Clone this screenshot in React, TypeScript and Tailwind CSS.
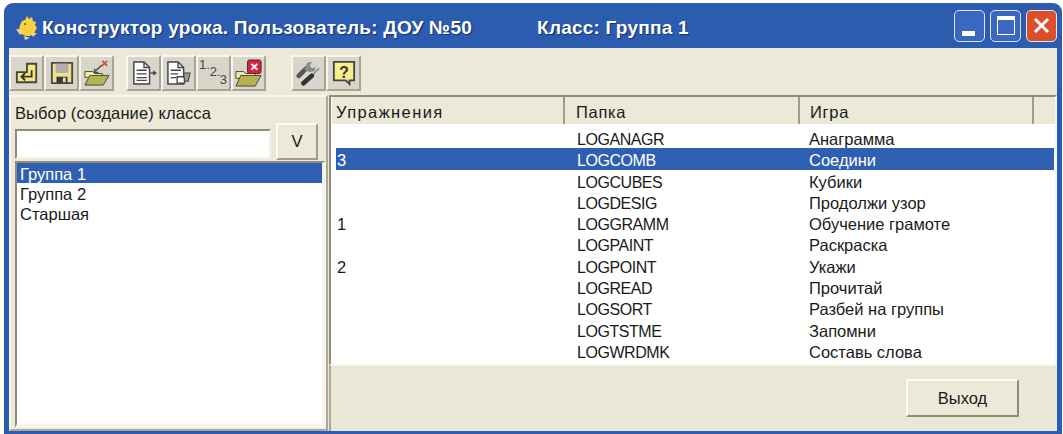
import type { ReactNode } from 'react';

const rows = [
  { order: '', folder: 'LOGANAGR', game: 'Анаграмма' },
  { order: '3', folder: 'LOGCOMB', game: 'Соедини', selected: true },
  { order: '', folder: 'LOGCUBES', game: 'Кубики' },
  { order: '', folder: 'LOGDESIG', game: 'Продолжи узор' },
  { order: '1', folder: 'LOGGRAMM', game: 'Обучение грамоте' },
  { order: '', folder: 'LOGPAINT', game: 'Раскраска' },
  { order: '2', folder: 'LOGPOINT', game: 'Укажи' },
  { order: '', folder: 'LOGREAD', game: 'Прочитай' },
  { order: '', folder: 'LOGSORT', game: 'Разбей на группы' },
  { order: '', folder: 'LOGTSTME', game: 'Запомни' },
  { order: '', folder: 'LOGWRDMK', game: 'Составь слова' },
];

const classes = ['Группа 1', 'Группа 2', 'Старшая'];

function ToolButton({ children }: { children: ReactNode }) {
  return (
    <div className="w-[35px] h-[36px] flex items-center justify-center bg-[#d8d5ca] border-2 border-t-[#f7f6ef] border-l-[#f7f6ef] border-r-[#a8a493] border-b-[#a8a493]">
      {children}
    </div>
  );
}

function IconEnter() {
  return (
    <svg width="24" height="24" viewBox="0 0 26 26">
      <path d="M13 3h10v20H2V12h11z" fill="#f5e67a" stroke="#444" strokeWidth="2" />
      <path d="M18 10v7H8M11 13l-4 4 4 4" fill="none" stroke="#333" strokeWidth="2" />
    </svg>
  );
}

function IconSave() {
  return (
    <svg width="24" height="24" viewBox="0 0 26 26">
      <path d="M2 2h22v22H2z" fill="#efe38a" stroke="#4a4a4a" strokeWidth="2" />
      <path d="M6 3h14v10H6z" fill="#b0b0ac" />
      <path d="M7 17h12v7H7z" fill="#3a3a3a" />
      <path d="M14 18h3v5h-3z" fill="#ddd" />
    </svg>
  );
}

function IconFolderOut() {
  return (
    <svg width="27" height="27" viewBox="0 0 28 28">
      <path d="M2 12h8l2 2h8v4H2z" fill="#f7ee9c" stroke="#444" />
      <path d="M2 26l5-10h20l-6 10z" fill="#b3b350" stroke="#444" />
      <path d="M11 13l9-8M12 9v4h4" fill="none" stroke="#555" strokeWidth="1.6" />
      <path d="M20 1l5 5M25 1l-5 5" stroke="#d9503a" strokeWidth="1.8" />
    </svg>
  );
}

function IconDocArrow() {
  return (
    <svg width="26" height="24" viewBox="0 0 28 26">
      <path d="M3 1h11l6 6v18H3z" fill="#fff" stroke="#444" strokeWidth="1.6" />
      <path d="M14 1v6h6M6 10h11M6 14h11M6 18h11M6 21h11" fill="none" stroke="#444" strokeWidth="1.5" />
      <path d="M21 13h4" stroke="#444" strokeWidth="1.5" />
      <path d="M24 10l4 3-4 3z" fill="#444" />
    </svg>
  );
}

function IconDocCopy() {
  return (
    <svg width="26" height="24" viewBox="0 0 28 26">
      <path d="M2 1h11l6 6v18H2z" fill="#fff" stroke="#444" strokeWidth="1.6" />
      <path d="M13 1v6h6M5 10h11M5 14h8M5 18h6" fill="none" stroke="#444" strokeWidth="1.5" />
      <path d="M12 17h8v7h-8z" fill="#fff" stroke="#444" strokeWidth="1.5" />
      <path d="M19 13h7l-2 9h-4z" fill="#999" stroke="#444" strokeWidth="1.2" />
    </svg>
  );
}

// staircase of digits, plain text rather than a drawing
function IconNumbers() {
  return (
    <div className="w-[29px] h-[30px] flex items-start text-[13px] leading-[14px] text-[#444]">
      <span>1.</span>
      <span className="mt-[7px]">2.</span>
      <span className="mt-[15px] -ml-[1px]">3</span>
    </div>
  );
}

function IconFolderDelete() {
  return (
    <svg width="29" height="29" viewBox="0 0 30 30">
      <path d="M2 13h8l2 2h10v5H2z" fill="#f7ee9c" stroke="#444" />
      <path d="M2 28l5-11h21l-6 11z" fill="#b3b350" stroke="#444" />
      <rect x="14" y="1" width="14" height="14" rx="2" fill="#e2203a" stroke="#333" />
      <path d="M18 5l6 6M24 5l-6 6" stroke="#fff" strokeWidth="2" />
    </svg>
  );
}

function IconTools() {
  return (
    <svg width="26" height="26" viewBox="0 0 28 28">
      <path d="M3 17l8-8" stroke="#555" strokeWidth="5" strokeLinecap="round" />
      <path d="M9 10l3-7 6-1-3 3 1 3 3 1 2-2-1 5-6 1z" fill="#8a8a88" />
      <path d="M25 9l-9 9" stroke="#888" strokeWidth="1.5" />
      <path d="M8 25l9-8" stroke="#333" strokeWidth="5" strokeLinecap="round" />
    </svg>
  );
}

function IconHelp() {
  return (
    <svg width="24" height="26" viewBox="0 0 26 28" fontFamily="'Liberation Sans', sans-serif">
      <path d="M2 2h22v20h-5v4l-4-4H2z" fill="#f7ef8e" stroke="#444" strokeWidth="2" />
      <text x="13" y="19" textAnchor="middle" fontSize="17" fontWeight="700" fill="#333">?</text>
    </svg>
  );
}

function AppIcon() {
  return (
    <svg width="24" height="26" viewBox="0 0 24 26" className="mr-[3px] -translate-y-[1px]">
      <path d="M12 1l2 3 3-2 1 4 3 1-1 3 2 3-2 3-1 3-4 2-4 0-5-2-2-4 1-5 2-4 3-1z" fill="#f6d23c" />
      <path d="M1 14l7 1-3 5zM16 18l6 0-4 4zM9 21l1 4 5-2z" fill="#f3d49a" />
      <circle cx="10" cy="9" r="1" fill="#553" />
    </svg>
  );
}

function WindowButton({ children, className }: { children: ReactNode; className: string }) {
  return (
    <div className={`w-[31px] h-[32px] rounded-[5px] border border-[#dfe6f5] relative flex items-center justify-center ${className}`}>
      {children}
    </div>
  );
}

export default function App() {
  return (
    <div className="w-[1063px] h-[434px] bg-white pt-[3px] pl-[4px] pr-[1px] font-['Liberation_Sans',sans-serif] text-[16.5px] text-[#1a1a1a] overflow-hidden">
      <div className="h-[431px] flex flex-col rounded-t-[9px] bg-[#2c5cb0] px-[5px] pb-[3px]">
        {/* title bar */}
        <div className="h-[45px] shrink-0 flex items-center pl-[6px] pr-[0px] pt-[6px] text-white font-bold text-[19px] tracking-[0.22px] [text-shadow:1px_1px_1px_#12306e]">
          <AppIcon />
          <span>Конструктор урока. Пользователь: ДОУ №50</span>
          <span className="ml-[65px]">Класс: Группа 1</span>
          <div className="ml-auto flex gap-[5px] -translate-y-[3px]">
            <WindowButton className="bg-[#3a67c0]">
              <div className="absolute left-[7px] bottom-[5px] w-[13px] h-[5px] bg-white" />
            </WindowButton>
            <WindowButton className="bg-[#3a67c0]">
              <div className="w-[18px] h-[19px] border border-white border-t-[4px]" />
            </WindowButton>
            <WindowButton className="bg-[#dc4f2c]">
              <svg width="19" height="19" viewBox="0 0 19 19">
                <path d="M3 3l13 13M16 3L3 16" stroke="#fff" strokeWidth="3" />
              </svg>
            </WindowButton>
          </div>
        </div>

        <div className="flex-1 min-h-0 flex flex-col bg-[#ece9d8]">
          {/* toolbar */}
          <div className="h-[47px] shrink-0 flex items-center pt-[3px]">
            <ToolButton><IconEnter /></ToolButton>
            <ToolButton><IconSave /></ToolButton>
            <ToolButton><IconFolderOut /></ToolButton>
            <div className="w-[12px]" />
            <ToolButton><IconDocArrow /></ToolButton>
            <ToolButton><IconDocCopy /></ToolButton>
            <ToolButton><IconNumbers /></ToolButton>
            <ToolButton><IconFolderDelete /></ToolButton>
            <div className="w-[25px]" />
            <ToolButton><IconTools /></ToolButton>
            <ToolButton><IconHelp /></ToolButton>
          </div>

          <div className="flex-1 min-h-0 flex">
            {/* class picker */}
            <div className="w-[319px] shrink-0 flex flex-col border-2 border-t-[#f7f6ef] border-l-[#f7f6ef] border-r-[#aca899] border-b-[#aca899] pl-[4px] pb-[1px]">
              <div className="h-[26px] flex items-end leading-[19px] tracking-[0.1px]">Выбор (создание) класса</div>
              <div className="flex">
                <div className="w-[256px] h-[30px] mt-[6px] bg-white border-2 border-t-[#8f8c7d] border-l-[#8f8c7d] border-r-[#f4f3ea] border-b-[#f4f3ea]" />
                <div className="ml-[5px] w-[42px] h-[37px] flex items-center justify-center bg-[#ece9d8] border-2 border-t-[#fbfaf4] border-l-[#fbfaf4] border-r-[#a09c8b] border-b-[#a09c8b]">V</div>
              </div>
              <div className="flex-1 mt-[1px] bg-white border-t-2 border-l-2 border-t-[#8f8c7d] border-l-[#8f8c7d] border-r-4 border-b-4 border-r-[#f6f5ec] border-b-[#f6f5ec]">
                {classes.map((name, i) => (
                  <div
                    key={name}
                    className={`h-[20px] pl-[3px] leading-[22px] ${i === 0 ? 'bg-[#2f5fb3] text-white' : ''}`}
                  >
                    {name}
                  </div>
                ))}
              </div>
            </div>

            {/* exercise table */}
            <div className="flex-1 min-w-0 flex flex-col ml-[1px]">
              <div className="h-[269px] shrink-0 flex flex-col bg-white border-l-2 border-t-2 border-[#8f8c7d] border-r-2 border-r-[#f6f5ec]">
                <div className="h-[27px] shrink-0 flex bg-[#ece9d8] leading-[31px] tracking-[0.7px]">
                  <div className="w-[234px] pl-[4px] border-r-2 border-r-[#a09c8b] border-l border-l-white tracking-[1.4px]">Упражнения</div>
                  <div className="w-[235px] pl-[11px] border-r-2 border-r-[#a09c8b]">Папка</div>
                  <div className="w-[234px] pl-[10px] border-r-2 border-r-[#a09c8b]">Игра</div>
                  <div className="flex-1" />
                </div>
                <div className="pt-[3px] pl-[5px] pr-[1px]">
                  {rows.map((row) => (
                    <div
                      key={row.folder}
                      className={`flex items-baseline h-[21.3px] leading-[24px] ${row.selected ? 'bg-[#2f5fb3] text-white' : ''}`}
                    >
                      <div className="w-[240px] pl-[1px]">{row.order}</div>
                      <div className="w-[233px] pl-[1px] text-[16px] tracking-[-0.45px]">{row.folder}</div>
                      <div>{row.game}</div>
                    </div>
                  ))}
                </div>
              </div>
              <div className="flex-1 flex items-start justify-end bg-[#e9e7d6] border-t-2 border-t-[#f7f6ef] border-l-2 border-l-[#aca899] pt-[13px] pr-[38px]">
                <div className="w-[113px] h-[38px] flex items-center justify-center bg-[#ece9d8] border-2 border-t-[#fbfaf4] border-l-[#fbfaf4] border-r-[#8f8c7d] border-b-[#8f8c7d]">
                  Выход
                </div>
              </div>
            </div>
          </div>
        </div>
      </div>
    </div>
  );
}
